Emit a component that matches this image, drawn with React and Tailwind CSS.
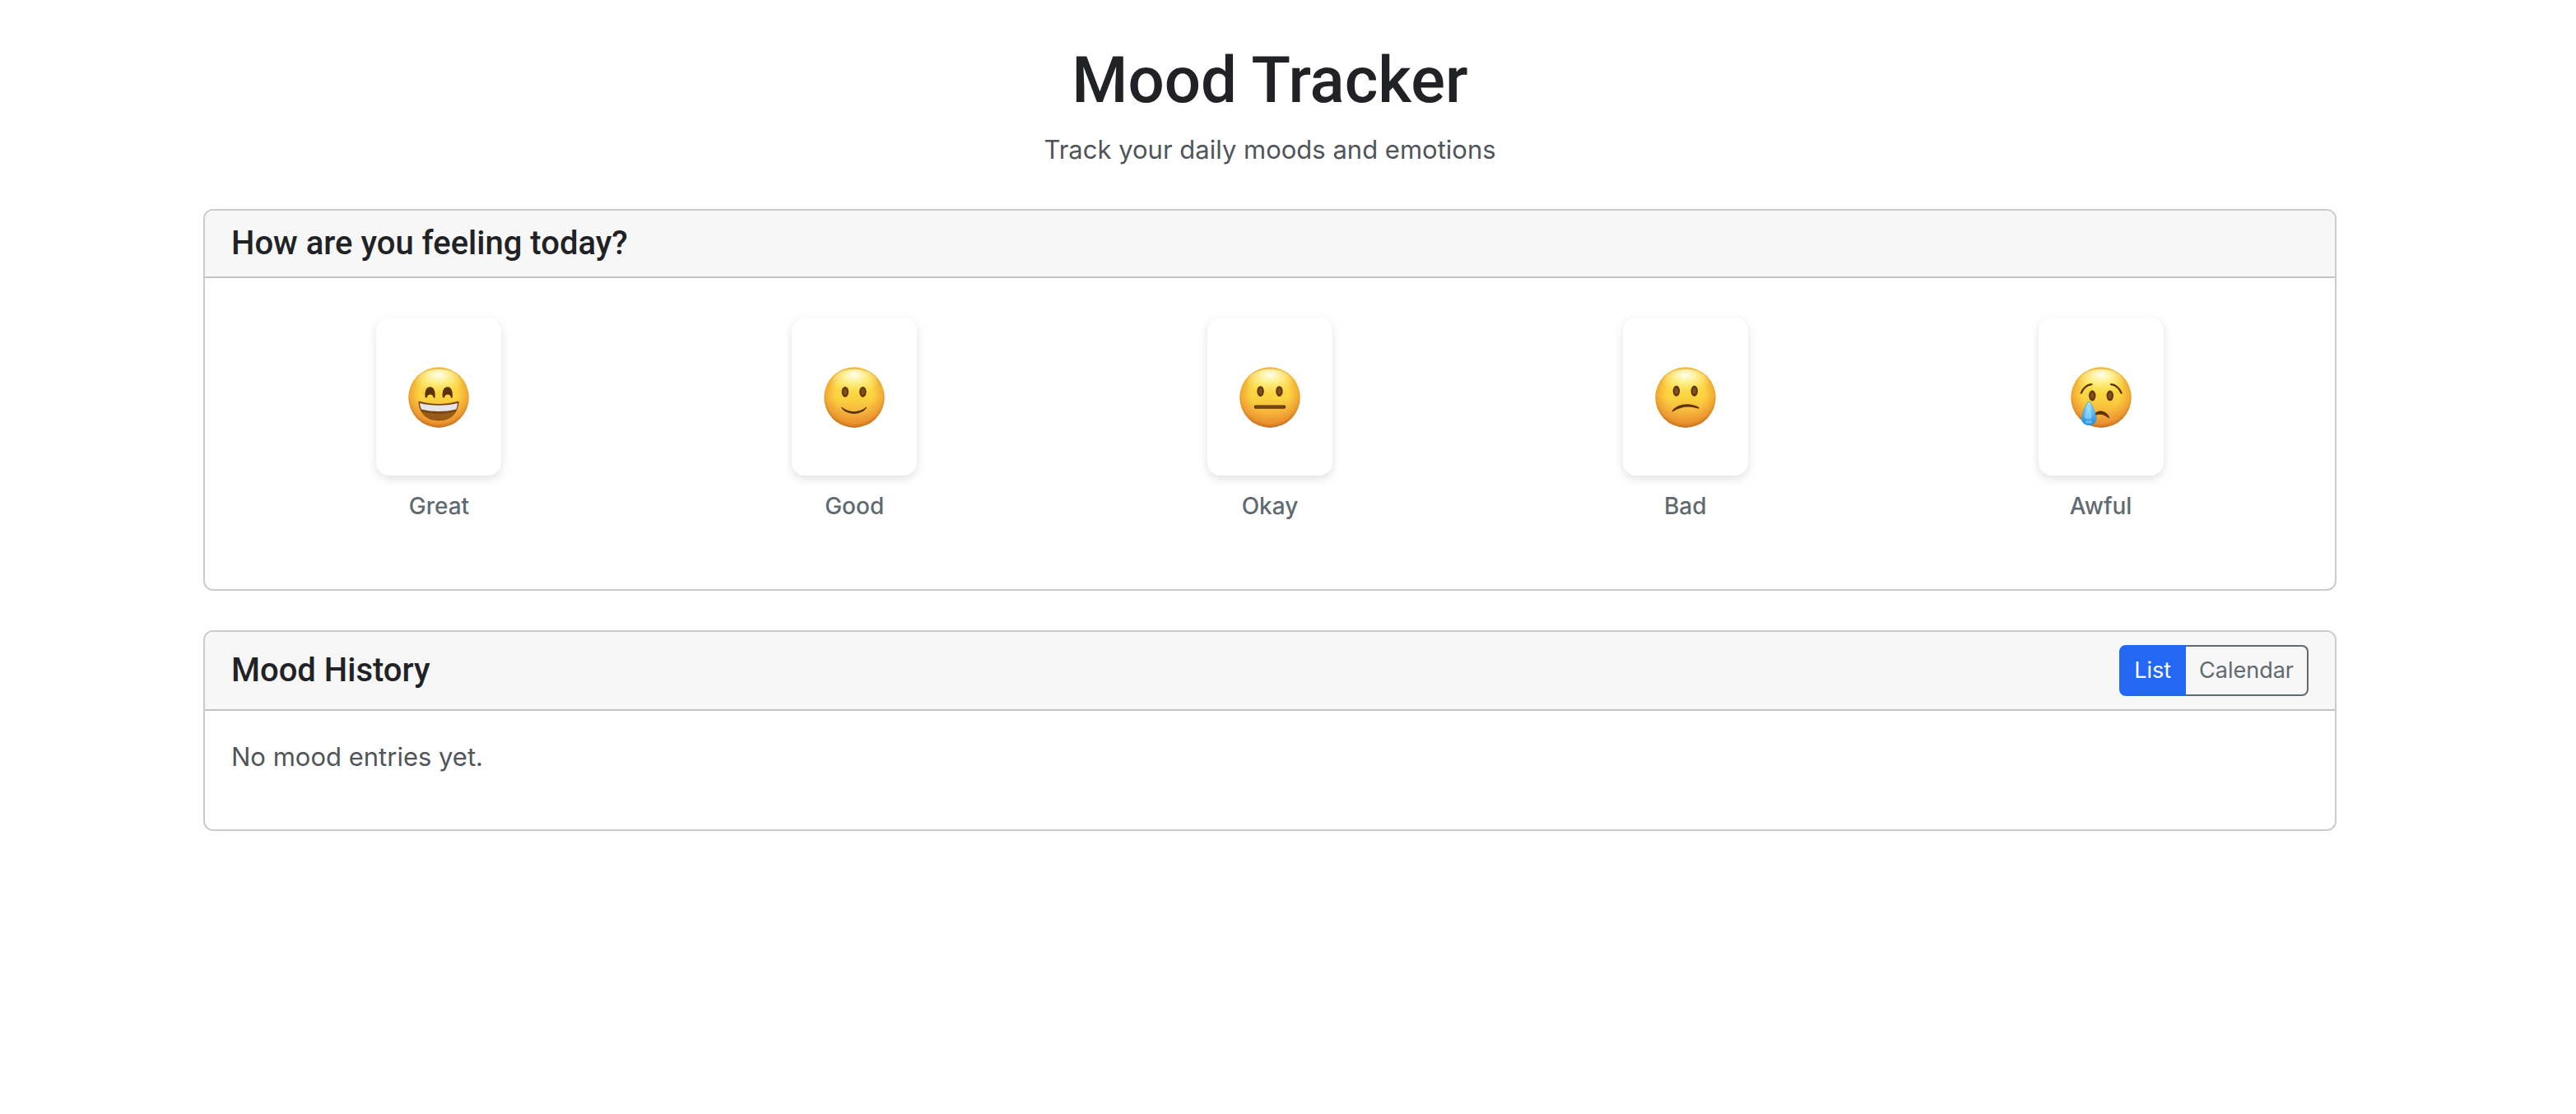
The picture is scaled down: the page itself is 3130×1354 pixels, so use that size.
import { useState } from "react";

const INK = "#5c3208";

function Face({ id, children }) {
  return (
    <svg viewBox="0 0 220 220" className="block size-[74px]" aria-hidden="true">
      <defs>
        <linearGradient id={`${id}-base`} x1="0" y1="0" x2="0" y2="1">
          <stop offset="0" stopColor="#fbdc48" />
          <stop offset="0.5" stopColor="#fbd440" />
          <stop offset="0.78" stopColor="#f5b23c" />
          <stop offset="1" stopColor="#e8922e" />
        </linearGradient>
        <radialGradient id={`${id}-rim`} cx="0.5" cy="0.45" r="0.56">
          <stop offset="0.55" stopColor="#ee922c" stopOpacity="0" />
          <stop offset="0.85" stopColor="#ea8d2b" stopOpacity="0.6" />
          <stop offset="1" stopColor="#b9651b" stopOpacity="0.95" />
        </radialGradient>
        <radialGradient id={`${id}-shine`} cx="0.5" cy="0.2" r="0.65">
          <stop offset="0" stopColor="#fffff4" stopOpacity="1" />
          <stop offset="0.4" stopColor="#fffbb0" stopOpacity="0.7" />
          <stop offset="1" stopColor="#fff176" stopOpacity="0" />
        </radialGradient>
        <linearGradient id={`${id}-tear`} x1="0" y1="0" x2="0" y2="1">
          <stop offset="0" stopColor="#b4e9ff" />
          <stop offset="0.4" stopColor="#62c4fb" />
          <stop offset="1" stopColor="#2184dc" />
        </linearGradient>
      </defs>
      <circle cx="110" cy="110" r="109" fill={`url(#${id}-base)`} />
      <circle cx="110" cy="110" r="109" fill={`url(#${id}-rim)`} />
      <ellipse cx="110" cy="60" rx="84" ry="52" fill={`url(#${id}-shine)`} />
      {children}
    </svg>
  );
}

function Eyes({ left, right, cy }) {
  return [left, right].map((cx) => (
    <g key={cx}>
      <ellipse cx={cx} cy={cy} rx="12.5" ry="19" fill={INK} />
      <ellipse cx={cx} cy={cy} rx="7" ry="12" fill="#80501a" />
    </g>
  ));
}

function Great() {
  return (
    <Face id="great">
      <path d="M61 107C59 84 67 72 79 72s20 13 18 37c-1 4-5 4-6 0-3-13-20-13-23 0-1 4-6 3-7-2z" fill={INK} />
      <path d="M124 107c-2-23 6-35 18-35s20 13 18 37c-1 4-5 4-6 0-3-13-20-13-23 0-1 4-6 3-7-2z" fill={INK} />
      <path d="M37 128c0-4 3-5 7-3 40 12 92 12 132 0 5-2 8-1 7 4-5 41-32 65-73 65s-70-25-73-66z" fill="#7b4510" />
      <path d="M46 160c32 12 96 12 128 0-11 21-34 32-64 32s-53-11-64-32z" fill="#985c17" />
      <path d="M42 131c42 11 94 11 136 0 0 9-2 15-5 22-38 10-88 10-125 0-4-7-6-14-6-22z" fill="#e6e6ea" />
    </Face>
  );
}

function Good() {
  return (
    <Face id="good">
      <Eyes left={77} right={141} cy={90} />
      <path d="M66 146c24 20 62 20 86 0 2-2 4 0 2 3-18 27-71 27-90 0-2-3 0-5 2-3z" fill={INK} />
    </Face>
  );
}

function Okay() {
  return (
    <Face id="okay">
      <Eyes left={76} right={144} cy={88} />
      <rect x="53" y="138" width="114" height="13" rx="6" fill={INK} />
      <rect x="60" y="142" width="100" height="5" rx="2" fill="#80501a" />
    </Face>
  );
}

function Bad() {
  return (
    <Face id="bad">
      <Eyes left={77} right={142} cy={87} />
      <path d="M62 158c15-25 64-32 95-13 4 3 2 7-3 5-31-11-61-7-87 10-4 3-7 2-5-2z" fill={INK} />
    </Face>
  );
}

function Awful() {
  return (
    <Face id="awful">
      <Eyes left={78} right={142} cy={104} />
      <path d="M38 94c8-18 20-29 37-31M183 94c-8-18-20-29-37-31" fill="none" stroke={INK} strokeWidth="7" strokeLinecap="round" />
      <path d="M84 172c12-18 42-18 55 8 2 5-1 7-5 3-14-12-33-15-50-6z" fill={INK} />
      <path d="M66 125c-7 0-26 45-26 61 0 15 11 24 26 24s26-9 26-24c0-16-19-61-26-61z" fill="url(#awful-tear)" stroke="#2d93dc" strokeWidth="2" />
      <path d="M66 136c-4 6-15 34-15 44 0 6 6 9 14 9s11-4 11-10c0-10-7-37-10-43z" fill="#d6f4ff" opacity="0.4" />
      <ellipse cx="66" cy="199" rx="13" ry="6" fill="#7fd6ff" opacity="0.6" />
    </Face>
  );
}

const MOODS = [
  { label: "Great", Icon: Great },
  { label: "Good", Icon: Good },
  { label: "Okay", Icon: Okay },
  { label: "Bad", Icon: Bad },
  { label: "Awful", Icon: Awful },
];

function Card({ title, action, children }) {
  return (
    <section className="mb-12 overflow-hidden rounded-xl border-2 border-[#cbcbcb] bg-white">
      <header className="flex items-center justify-between border-b-2 border-[#c4c4c4] bg-[#f7f7f7] px-8 py-4">
        <h2 className="font-['Roboto','Liberation_Sans',sans-serif] text-[40px] leading-[48px] font-medium text-[#212226]">
          {title}
        </h2>
        {action}
      </header>
      {children}
    </section>
  );
}

export default function App() {
  const [view, setView] = useState("List");
  const [mood, setMood] = useState(null);

  const toggle = (
    <div className="flex" role="group" aria-label="History view">
      {["List", "Calendar"].map((name) => (
        <button
          key={name}
          type="button"
          aria-pressed={view === name}
          onClick={() => setView(name)}
          className={
            "border-2 px-4 py-2 text-[27px] leading-[42px] first:rounded-l-lg last:rounded-r-lg last:border-l-0 " +
            (view === name ? "border-[#2268f5] bg-[#2268f5] text-white" : "border-[#5f6a71] text-[#5f6a71]")
          }
        >
          {name}
        </button>
      ))}
    </div>
  );

  return (
    <div className="bg-white pr-11 font-['Inter','Liberation_Sans',sans-serif]">
      <main className="mx-auto max-w-[2640px] px-6 pt-[50px]">
        <div className="mb-12 text-center">
          <h1 className="mb-3 font-['Roboto','Liberation_Sans',sans-serif] text-[78px] leading-[96px] font-medium text-[#212226]">
            Mood Tracker
          </h1>
          <p className="text-[31px] leading-[48px] text-[#50555a]">Track your daily moods and emotions</p>
        </div>

        <Card title="How are you feeling today?">
          <div className="grid grid-cols-5 px-8 pt-12 pb-20">
            {MOODS.map(({ label, Icon }) => (
              <div key={label} className="flex flex-col items-center gap-4">
                <button
                  type="button"
                  aria-label={label}
                  aria-pressed={mood === label}
                  onClick={() => setMood(label)}
                  className="flex h-48 w-[152px] items-center justify-center rounded-2xl bg-white pt-0.5 shadow-[0_4px_12px_rgba(0,0,0,0.12)]"
                >
                  <Icon />
                </button>
                <span className="text-[28px] leading-[42px] font-medium text-[#5f6a71]">{label}</span>
              </div>
            ))}
          </div>
        </Card>

        <Card title="Mood History" action={toggle}>
          <div className="px-8 pt-8 pb-16">
            <p className="text-[31px] leading-[48px] text-[#50555a]">No mood entries yet.</p>
          </div>
        </Card>
      </main>
    </div>
  );
}
